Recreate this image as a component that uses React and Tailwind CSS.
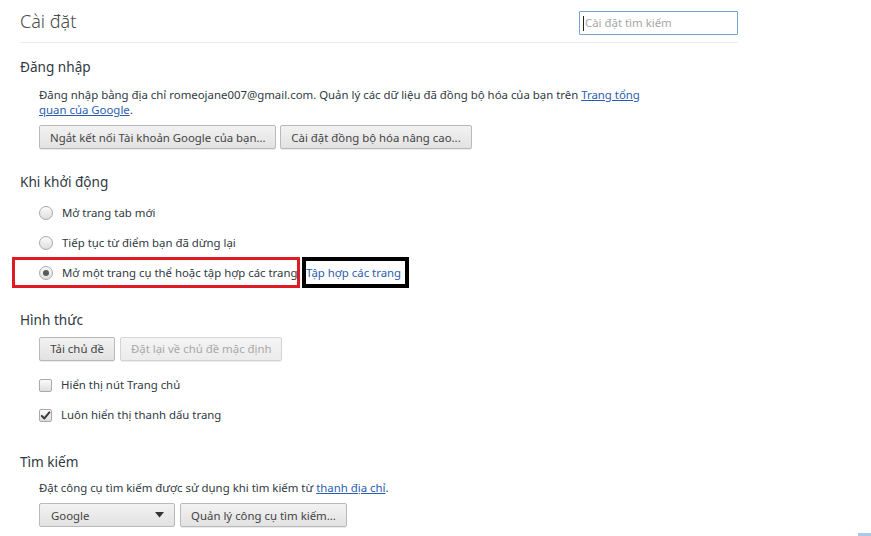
import React from 'react';

const font = { fontFamily: '"Noto Sans", "Open Sans", sans-serif' };

const Button = ({ children, disabled, className = '' }) => (
  <button
    className={`h-[24px] px-[10px] text-[11.4px] whitespace-nowrap rounded-[2px] border border-[#b9b9b9] bg-gradient-to-b from-[#f2f2f2] to-[#e2e2e2] shadow-[0_1px_0_rgba(0,0,0,0.08)] ${disabled ? 'text-[#a8a8a8] border-[#d4d4d4] from-[#f4f4f4] to-[#ececec]' : 'text-[#444]'} ${className}`}
  >
    {children}
  </button>
);

const Radio = ({ checked }) => (
  <span className="w-[14px] h-[14px] rounded-full border border-[#a9a9a9] bg-gradient-to-b from-[#fbfbfb] to-[#dedede] flex items-center justify-center shrink-0">
    {checked && <span className="w-[6px] h-[6px] rounded-full bg-[#5a5a5a]" />}
  </span>
);

const Checkbox = ({ checked }) => (
  <span className="w-[13px] h-[13px] rounded-[2px] border border-[#a9a9a9] bg-gradient-to-b from-[#fbfbfb] to-[#dedede] flex items-center justify-center shrink-0">
    {checked && (
      <svg width="11" height="11" viewBox="0 0 12 12">
        <path d="M2 6.5 L4.8 9.2 L10.2 2.6" fill="none" stroke="#3c3c3c" strokeWidth="2.2" strokeLinecap="round" strokeLinejoin="round" />
      </svg>
    )}
  </span>
);

const Heading = ({ children, className = '' }) => (
  <div className={`h-[30px] flex items-center text-[13.6px] text-[#303942] ${className}`}>{children}</div>
);

export default function App() {
  return (
    <div className="relative w-[871px] h-[536px] overflow-hidden bg-white text-[#303942]" style={font}>
      <div className="pl-[20px] w-[738px]">
        {/* header */}
        <div className="h-[43px] flex items-start justify-between border-b border-[#ececec]">
          <div className="pt-[7px] leading-[28px] text-[18px] text-[#4a4a4a] font-light">Cài đặt</div>
          <div className="mt-[11px] w-[159px] h-[24px] border border-[#77a1cf] rounded-[1px] flex items-center pl-[3px] text-[11.4px] text-[#a6a6a6]">
            <span className="w-px h-[15px] bg-[#222] mr-[1px]" />
            Cài đặt tìm kiếm
          </div>
        </div>

        {/* Đăng nhập */}
        <Heading className="mt-[9px]">Đăng nhập</Heading>
        <div className="pl-[19px] mt-[5px] text-[11.4px] leading-[15px]">
          <p className="whitespace-nowrap">
            Đăng nhập bằng địa chỉ romeojane007@gmail.com. Quản lý các dữ liệu đã đồng bộ hóa của bạn trên{' '}
            <a className="text-[#2a5db0] underline">Trang tổng</a>
            <br />
            <a className="text-[#2a5db0] underline">quan của Google</a>.
          </p>
          <div className="mt-[8px] flex gap-[4px]">
            <Button className="w-[237px]">Ngắt kết nối Tài khoản Google của bạn...</Button>
            <Button className="w-[192px]">Cài đặt đồng bộ hóa nâng cao...</Button>
          </div>
        </div>

        {/* Khi khởi động */}
        <Heading className="mt-[18px]">Khi khởi động</Heading>
        <div className="mt-[1px] text-[11.4px]">
          <div className="h-[30px] pl-[19px] flex items-center gap-[9px]">
            <Radio />
            <span>Mở trang tab mới</span>
          </div>
          <div className="h-[30px] pl-[19px] flex items-center gap-[9px]">
            <Radio />
            <span>Tiếp tục từ điểm bạn đã dừng lại</span>
          </div>
          <div className="h-[31px] -ml-[8px] -mt-[1px] flex items-stretch">
            <div className="w-[288px] border-[3px] border-[#e11b26] pl-[24px] flex items-center gap-[9px] whitespace-nowrap">
              <Radio checked />
              <span>Mở một trang cụ thể hoặc tập hợp các trang</span>
            </div>
            <div className="ml-[2px] w-[107px] border-[4px] border-black flex items-center whitespace-nowrap text-[#2a5db0]">
              Tập hợp các trang
            </div>
          </div>
        </div>

        {/* Hình thức */}
        <Heading className="mt-[17px]">Hình thức</Heading>
        <div className="pl-[19px] mt-[2px] text-[11.4px]">
          <div className="flex gap-[5px]">
            <Button className="w-[76px]">Tải chủ đề</Button>
            <Button disabled className="w-[162px]">Đặt lại về chủ đề mặc định</Button>
          </div>
          <div className="mt-[9px] h-[30px] flex items-center gap-[9px]">
            <Checkbox />
            <span>Hiển thị nút Trang chủ</span>
          </div>
          <div className="h-[30px] flex items-center gap-[9px]">
            <Checkbox checked />
            <span>Luôn hiển thị thanh dấu trang</span>
          </div>
        </div>

        {/* Tìm kiếm */}
        <Heading className="mt-[17px]">Tìm kiếm</Heading>
        <div className="pl-[19px] mt-[3px] text-[11.4px] leading-[15px]">
          <p>
            Đặt công cụ tìm kiếm được sử dụng khi tìm kiếm từ{' '}
            <a className="text-[#2a5db0] underline">thanh địa chỉ</a>.
          </p>
          <div className="mt-[8px] flex gap-[5px]">
            <div className="w-[136px] h-[24px] pl-[11px] pr-[10px] rounded-[2px] border border-[#b9b9b9] bg-gradient-to-b from-[#f2f2f2] to-[#e2e2e2] flex items-center justify-between text-[#444]">
              <span>Google</span>
              <svg width="9" height="6" viewBox="0 0 9 6">
                <path d="M0 0 H9 L4.5 5.5 Z" fill="#333" />
              </svg>
            </div>
            <Button className="w-[167px]">Quản lý công cụ tìm kiếm...</Button>
          </div>
        </div>
      </div>
      <div className="absolute left-[858px] top-[533px] w-[13px] h-[3px] bg-[#a9cbea]" />
    </div>
  );
}
